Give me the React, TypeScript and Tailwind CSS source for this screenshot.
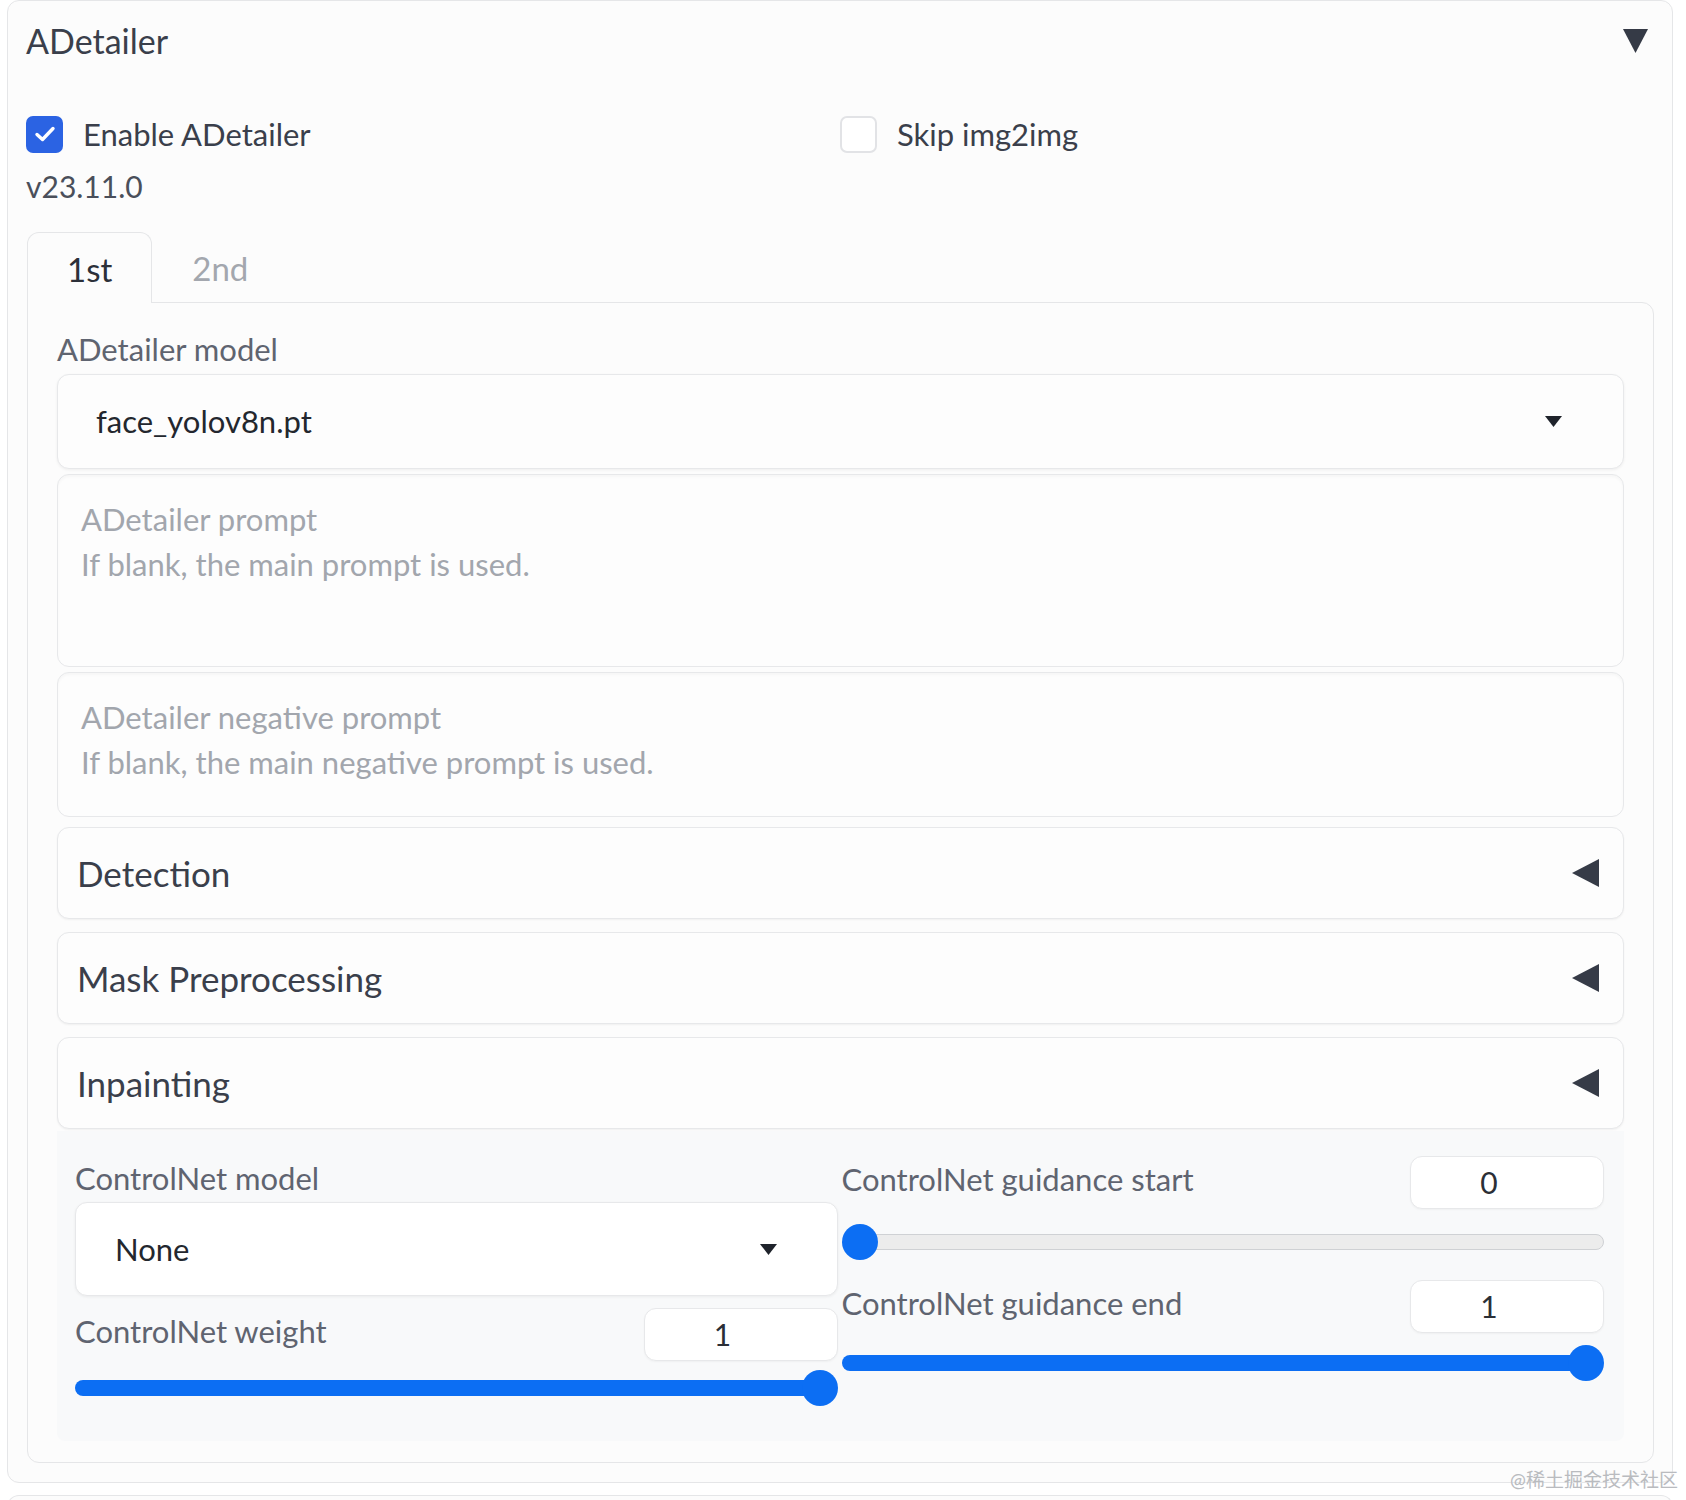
import React from "react";

const font = "font-['Lato','Noto_Sans_CJK_SC',sans-serif]";

const LeftTriangle = () => (
  <svg width="27" height="28" viewBox="0 0 27 28" className="shrink-0">
    <path d="M0 14 L27 0 L27 28 Z" fill="#363b47" />
  </svg>
);

const SelectArrow = () => (
  <svg width="17" height="11" viewBox="0 0 17 11" className="shrink-0">
    <path d="M0 0 L17 0 L8.5 11 Z" fill="#1f232b" />
  </svg>
);

const Accordion = ({ title, className }: { title: string; className: string }) => (
  <div
    className={`flex h-[92px] items-center justify-between rounded-xl border border-[#e7e8ea] bg-[#fdfdfd] pl-[19px] pr-[24px] shadow-[0_1px_2px_rgba(0,0,0,0.05)] ${className}`}
  >
    <span className="text-[35px] leading-none text-[#3a3f4b]">{title}</span>
    <LeftTriangle />
  </div>
);

const NumberBox = ({ value }: { value: string }) => (
  <div className="flex h-[53px] w-[194px] items-center justify-center rounded-xl border border-[#e7e8ea] bg-white pr-[36px] text-[30px] text-[#2b2f36] shadow-[0_1px_2px_rgba(0,0,0,0.04)]">
    {value}
  </div>
);

// value is either 0 or 1 here, so the thumb sits at one of the ends
const Slider = ({ full }: { full: boolean }) => (
  <div className="relative h-[36px]">
    {full ? (
      <div className="absolute left-0 right-[6px] top-[10px] h-[16px] rounded-full bg-[#0c6ef3]" />
    ) : (
      <div className="absolute left-[2px] right-0 top-[10px] h-[16px] rounded-full border border-[#cfd1d4] bg-[#ececec]" />
    )}
    <div
      className={`absolute top-0 h-[36px] w-[36px] rounded-full bg-[#0c6ef3] ${full ? "right-0" : "left-0"}`}
    />
  </div>
);

export default function App() {
  return (
    <div className={`min-h-screen bg-white ${font}`}>
      <div className="ml-[7px] w-[1666px] rounded-xl border border-[#e5e6e8] bg-[#fcfcfc] px-[18px] pb-[19px]">
        {/* header */}
        <div className="flex h-[80px] items-center justify-between">
          <span className="text-[34px] leading-none text-[#3a3f4b]">ADetailer</span>
          <svg width="25" height="24" viewBox="0 0 25 24" className="mr-[6px]">
            <path d="M0 0 L25 0 L12.5 24 Z" fill="#353a46" />
          </svg>
        </div>

        <div className="mt-[30px] grid h-[40px] grid-cols-2 items-center">
          <label className="flex items-center gap-[20px]">
            <span className="flex h-[37px] w-[37px] items-center justify-center rounded-[7px] bg-[#2b63e3]">
              <svg width="22" height="18" viewBox="0 0 22 18">
                <path d="M3 9.5 L8.5 14.5 L19 3.5" fill="none" stroke="white" strokeWidth="3.4" strokeLinecap="round" strokeLinejoin="round" />
              </svg>
            </span>
            <span className="text-[31px] text-[#3a3f4b]">Enable ADetailer</span>
          </label>
          <label className="flex items-center gap-[20px]">
            <span className="h-[37px] w-[37px] rounded-[7px] border-2 border-[#e2e3e6] bg-white" />
            <span className="text-[31px] text-[#3a3f4b]">Skip img2img</span>
          </label>
        </div>

        <div className="mt-[15px] h-[40px] text-[30px] leading-[40px] text-[#4a4f5a]">v23.11.0</div>

        {/* tabs */}
        <div className="mt-[25px] flex items-end">
          <div className="relative z-10 -mb-px ml-px flex h-[71px] items-center rounded-t-xl border border-b-0 border-[#e5e6e8] bg-[#fcfcfc] px-[39px] pt-[4px] text-[33px] text-[#2c3039]">
            1st
          </div>
          <div className="flex h-[71px] items-center px-[40px] pt-[4px] text-[33px] text-[#a3a7ae]">2nd</div>
        </div>

        <div className="ml-px rounded-b-xl rounded-tr-xl border border-[#e5e6e8] px-[29px] pb-[21px] pt-[26px]">
          <div className="text-[31px] leading-[40px] text-[#5f6470]">ADetailer model</div>

          <div className="mt-[5px] flex h-[95px] items-center justify-between rounded-xl border border-[#e7e8ea] bg-[#fdfdfd] pl-[38px] pr-[61px] shadow-[0_1px_3px_rgba(0,0,0,0.06)]">
            <span className="text-[31px] text-[#23272e]">face_yolov8n.pt</span>
            <SelectArrow />
          </div>

          <div className="mt-[5px] h-[193px] rounded-xl border border-[#e7e8ea] bg-[#fdfdfd] px-[23px] pt-[22px] text-[31px] leading-[45px] text-[#a2a6ad] shadow-[inset_0_2px_3px_rgba(0,0,0,0.03)]">
            <div>ADetailer prompt</div>
            <div>If blank, the main prompt is used.</div>
          </div>

          <div className="mt-[5px] h-[145px] rounded-xl border border-[#e7e8ea] bg-[#fdfdfd] px-[23px] pt-[22px] text-[31px] leading-[45px] text-[#a2a6ad] shadow-[inset_0_2px_3px_rgba(0,0,0,0.03)]">
            <div>ADetailer negative prompt</div>
            <div>If blank, the main negative prompt is used.</div>
          </div>

          <Accordion title="Detection" className="mt-[10px]" />
          <Accordion title="Mask Preprocessing" className="mt-[13px]" />
          <Accordion title="Inpainting" className="mt-[13px]" />

          {/* controlnet */}
          <div className="mt-[2px] grid h-[310px] grid-cols-2 gap-[4px] rounded-b-lg bg-[#f8f9fa] pl-[18px] pr-[20px]">
            <div className="pt-[27px]">
              <div className="text-[31px] leading-[40px] text-[#5f6470]">ControlNet model</div>
              <div className="mt-[4px] flex h-[94px] items-center justify-between rounded-xl border border-[#e7e8ea] bg-white pl-[39px] pr-[60px] shadow-[0_1px_3px_rgba(0,0,0,0.06)]">
                <span className="text-[31px] text-[#23272e]">None</span>
                <SelectArrow />
              </div>
              <div className="mt-[12px] flex items-center justify-between">
                <span className="-mt-[8px] text-[31px] leading-[40px] text-[#5f6470]">ControlNet weight</span>
                <NumberBox value="1" />
              </div>
              <div className="mt-[9px]">
                <Slider full />
              </div>
            </div>

            <div className="pt-[25px]">
              <div className="flex items-center justify-between">
                <span className="-mt-[8px] text-[31px] leading-[40px] text-[#5f6470]">ControlNet guidance start</span>
                <NumberBox value="0" />
              </div>
              <div className="mt-[15px]">
                <Slider full={false} />
              </div>
              <div className="mt-[20px] flex items-center justify-between">
                <span className="-mt-[8px] text-[31px] leading-[40px] text-[#5f6470]">ControlNet guidance end</span>
                <NumberBox value="1" />
              </div>
              <div className="mt-[12px]">
                <Slider full />
              </div>
            </div>
          </div>
        </div>
      </div>

      <div className="relative ml-[7px] mt-[12px] h-[20px] w-[1666px] rounded-t-xl border border-b-0 border-[#e5e6e8] bg-[#fcfcfc]">
        <span className="absolute -right-[6px] -top-[26px] text-[19px] leading-none text-[#b9bbbf]">@稀土掘金技术社区</span>
      </div>
    </div>
  );
}
